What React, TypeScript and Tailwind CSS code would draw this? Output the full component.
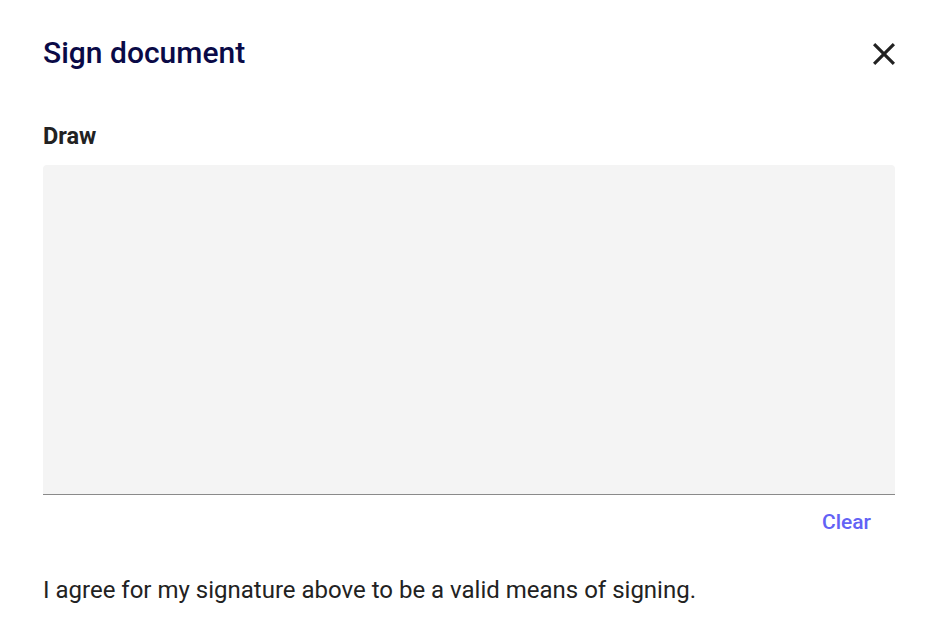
export default function App() {
  return (
    <div className="w-[943px] h-[634px] bg-white pl-[43px] pr-[48px] pt-[34px]" style={{ fontFamily: 'Roboto, "Open Sans", sans-serif' }}>
      <header className="flex items-center justify-between h-[38px]">
        <h1 className="text-[30px] font-medium text-[#0a0a47] leading-[38px]">Sign document</h1>
        <button className="w-[22px] h-[22px] flex items-center justify-center mt-[2px] text-[#222]">
          <svg width="22" height="22" viewBox="5 5 14 14" fill="currentColor">
            <path d="M19 6.41 17.59 5 12 10.59 6.41 5 5 6.41 10.59 12 5 17.59 6.41 19 12 13.41 17.59 19 19 17.59 13.41 12z" />
          </svg>
        </button>
      </header>

      <h2 className="mt-[50px] text-[23.5px] font-bold text-[#222] leading-[28px]">Draw</h2>

      <div className="mt-[15px] h-[330px] bg-[#f4f4f4] rounded-t-[4px] border-b border-[#8a8a8a]" />

      <div className="flex justify-end mt-[14px] pr-[24px]">
        <button className="text-[21px] font-medium text-[#6262f5] leading-[26px]">Clear</button>
      </div>

      <p className="mt-[40px] text-[24px] text-[#222] leading-[30px]">
        I agree for my signature above to be a valid means of signing.
      </p>
    </div>
  );
}
